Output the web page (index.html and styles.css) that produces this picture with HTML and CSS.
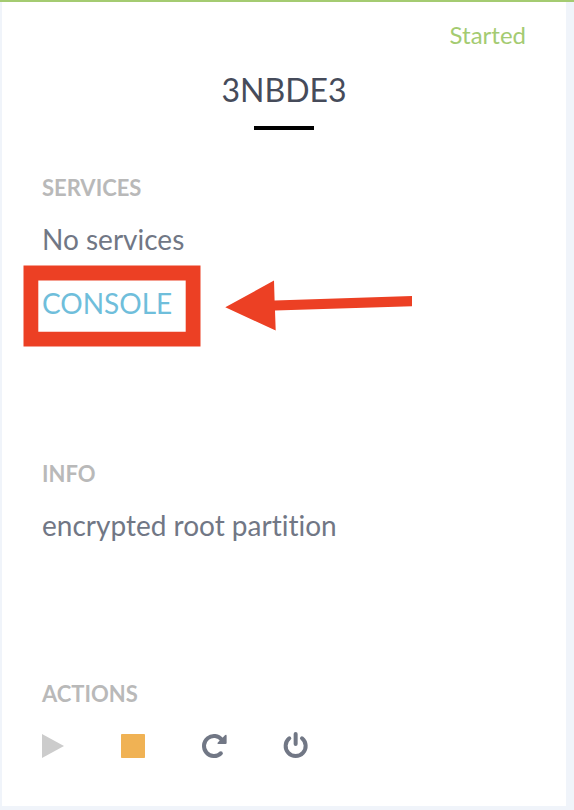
FILE: index.html
```html
<!DOCTYPE html>
<html lang="en">
<head>
<meta charset="utf-8">
<title>3NBDE3</title>
<link rel="stylesheet" href="styles.css">
</head>
<body>
<main class="card">
  <div class="status">Started</div>
  <h1 class="title">3NBDE3</h1>
  <div class="rule"></div>
  <section class="services">
    <h2 class="label">SERVICES</h2>
    <p class="text">No services</p>
    <a class="text console"><span>CONSOLE</span></a>
  </section>
  <section class="info">
    <h2 class="label">INFO</h2>
    <p class="text">encrypted root partition</p>
  </section>
  <section>
    <h2 class="label">ACTIONS</h2>
    <div class="actions">
      <svg class="icon play" viewBox="0 0 24 26"><path fill="#ccc" d="M0 2L22 14L0 26Z"/></svg>
      <svg class="icon" viewBox="0 0 26 26"><rect x="0" y="2" width="24" height="24" rx=".8" fill="#f0b254"/></svg>
      <svg class="icon" viewBox="0 0 26 26"><path fill="none" stroke="#717785" stroke-width="4" d="M20 8A10 10 0 1 0 18.9 21.2"/><circle cx="18.8" cy="21.2" r="2" fill="#717785"/><path fill="#717785" d="M23.2 3.1Q24.6 2.1 24.6 3.7V10.9Q24.6 12 23.5 12H16.3Q14.6 12 15.8 10.6Z"/></svg>
      <svg class="icon" viewBox="0 0 26 26"><g fill="none" stroke="#717785" stroke-width="4" stroke-linecap="round"><path d="M6.3 6.3A10 10 0 1 0 19 6.3"/><path d="M12.65 2V11.9"/></g></svg>
    </div>
  </section>
</main>
<svg class="callout" viewBox="0 0 400 90"><g fill="#ec4024"><path fill-rule="evenodd" d="M3.5 7.5H180.5V88.5H3.5ZM18.3 22.5V73.7H165.7V22.5Z"/><path d="M205.3 49.3L254 22.6L254.6 42.5L392 38V48.2L255 52.6L255.7 72.5Z"/></g></svg>
</body>
</html>
```

FILE: styles.css
```css
* {
  box-sizing: border-box;
  margin: 0;
  padding: 0;
}

body {
  height: 810px;
  overflow: hidden;
  background: #f0f4fa;
  border-top: 2px solid #a4cb71;
  font-family: Lato, sans-serif;
  font-variant-ligatures: none;
  position: relative;
}

.card {
  width: 564px;
  height: 804px;
  margin-left: 2px;
  padding: 19px 40px 0;
  background: #fff;
}

.status {
  color: #a4cb71;
  font-size: 24px;
  line-height: 28px;
  text-align: right;
}

.title {
  margin-top: 21px;
  color: #464b5a;
  font-size: 32px;
  font-weight: 400;
  line-height: 40px;
  text-align: center;
}

.rule {
  width: 60px;
  height: 4px;
  margin: 16px auto 0;
  background: #000;
}

.services {
  height: 286px;
  margin-top: 44px;
}

.info {
  height: 220px;
}

.label {
  color: #b9b9b9;
  font-size: 22px;
  font-weight: 700;
  line-height: 28px;
}

.text {
  display: block;
  margin-top: 21px;
  color: #717785;
  font-size: 28px;
  line-height: 32px;
}

.console {
  margin-top: 32px;
  color: #6fbedb;
}

.actions {
  display: flex;
  gap: 55px;
  margin-top: 24px;
}

.icon {
  width: 26px;
  height: 26px;
  overflow: visible;
}

.play {
  width: 24px;
}

.callout {
  position: absolute;
  top: 256px;
  left: 20px;
  width: 400px;
  height: 90px;
}
```
